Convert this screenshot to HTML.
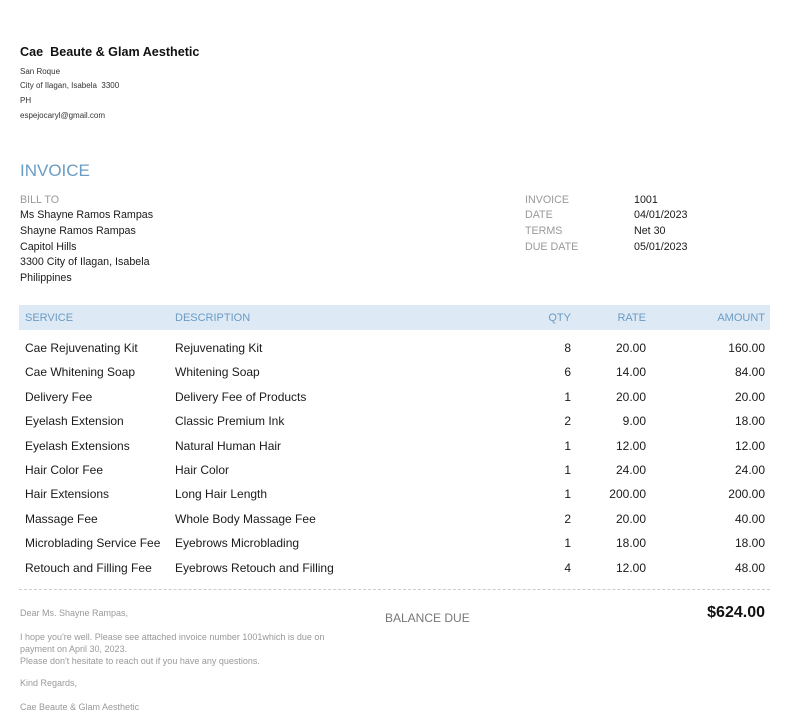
<!DOCTYPE html>
<html><head><meta charset="utf-8"><style>
body{margin:0;width:786px;height:720px;background:#fff;font-family:"Liberation Sans",Arial,sans-serif;position:relative;overflow:hidden;color:#222}
div{position:absolute;white-space:nowrap}
.s{font-size:8px;color:#333}
.b{font-size:10.7px;color:#1a1a1a}
.g{font-size:10.7px;color:#999}
.h{font-size:11px;color:#6a9cc4}
.r{text-align:right}
.f{font-size:9px;color:#999}
</style></head><body>
<div style="left:20px;top:45px;font-size:12.6px;font-weight:bold;color:#111">Cae&nbsp; Beaute &amp; Glam Aesthetic</div>
<div class="s" style="left:20px;top:67px">San Roque</div>
<div class="s" style="left:20px;top:81px">City of Ilagan, Isabela&nbsp; 3300</div>
<div class="s" style="left:20px;top:96px">PH</div>
<div class="s" style="left:20px;top:111px">espejocaryl@gmail.com</div>
<div style="left:20px;top:161px;font-size:17px;color:#6a9cc4">INVOICE</div>
<div class="g" style="left:20px;top:194px">BILL TO</div>
<div class="b" style="left:20px;top:209px">Ms Shayne Ramos Rampas</div>
<div class="b" style="left:20px;top:225px">Shayne Ramos Rampas</div>
<div class="b" style="left:20px;top:241px">Capitol Hills</div>
<div class="b" style="left:20px;top:256px">3300 City of Ilagan, Isabela</div>
<div class="b" style="left:20px;top:272px">Philippines</div>
<div class="g" style="left:525px;top:194px">INVOICE</div><div class="b" style="left:634px;top:194px">1001</div>
<div class="g" style="left:525px;top:209px">DATE</div><div class="b" style="left:634px;top:209px">04/01/2023</div>
<div class="g" style="left:525px;top:225px">TERMS</div><div class="b" style="left:634px;top:225px">Net 30</div>
<div class="g" style="left:525px;top:241px">DUE DATE</div><div class="b" style="left:634px;top:241px">05/01/2023</div>
<div style="left:19px;top:305px;width:751px;height:25px;background:#dde9f4"></div>
<div class="h" style="left:25px;top:312px">SERVICE</div>
<div class="h" style="left:175px;top:312px">DESCRIPTION</div>
<div class="h r" style="left:471px;width:100px;top:312px">QTY</div>
<div class="h r" style="left:546px;width:100px;top:312px">RATE</div>
<div class="h r" style="left:665px;width:100px;top:312px">AMOUNT</div>
<div style="left:19px;top:589px;width:751px;border-top:1px dashed #ccc"></div>
<div class="f" style="left:20px;top:608px">Dear Ms. Shayne Rampas,</div>
<div class="f" style="left:20px;top:631px;line-height:12px">I hope you're well. Please see attached invoice number 1001which is due on<br>payment on April 30, 2023.<br>Please don't hesitate to reach out if you have any questions.</div>
<div class="f" style="left:20px;top:678px">Kind Regards,</div>
<div class="f" style="left:20px;top:702px">Cae Beaute &amp; Glam Aesthetic</div>
<div style="left:385px;top:611px;font-size:12px;color:#777">BALANCE DUE</div>
<div style="left:665px;width:100px;top:604px;font-size:16px;font-weight:bold;color:#111;text-align:right">$624.00</div>
<div id="rows"></div>
<script>
var d=[["Cae Rejuvenating Kit","Rejuvenating Kit","8","20.00","160.00"],["Cae Whitening Soap","Whitening Soap","6","14.00","84.00"],["Delivery Fee","Delivery Fee of Products","1","20.00","20.00"],["Eyelash Extension","Classic Premium Ink","2","9.00","18.00"],["Eyelash Extensions","Natural Human Hair","1","12.00","12.00"],["Hair Color Fee","Hair Color","1","24.00","24.00"],["Hair Extensions","Long Hair Length","1","200.00","200.00"],["Massage Fee","Whole Body Massage Fee","2","20.00","40.00"],["Microblading Service Fee","Eyebrows Microblading","1","18.00","18.00"],["Retouch and Filling Fee","Eyebrows Retouch and Filling","4","12.00","48.00"]];
var h="";d.forEach(function(r,i){var t=341+i*24.4;
h+='<div class="b" style="left:25px;top:'+t+'px;font-size:12px">'+r[0]+'</div><div class="b" style="left:175px;top:'+t+'px;font-size:12px">'+r[1]+'</div><div class="b r" style="left:471px;width:100px;top:'+t+'px;font-size:12px">'+r[2]+'</div><div class="b r" style="left:546px;width:100px;top:'+t+'px;font-size:12px">'+r[3]+'</div><div class="b r" style="left:665px;width:100px;top:'+t+'px;font-size:12px">'+r[4]+'</div>';});
document.getElementById("rows").outerHTML=h;
</script>
</body></html>
